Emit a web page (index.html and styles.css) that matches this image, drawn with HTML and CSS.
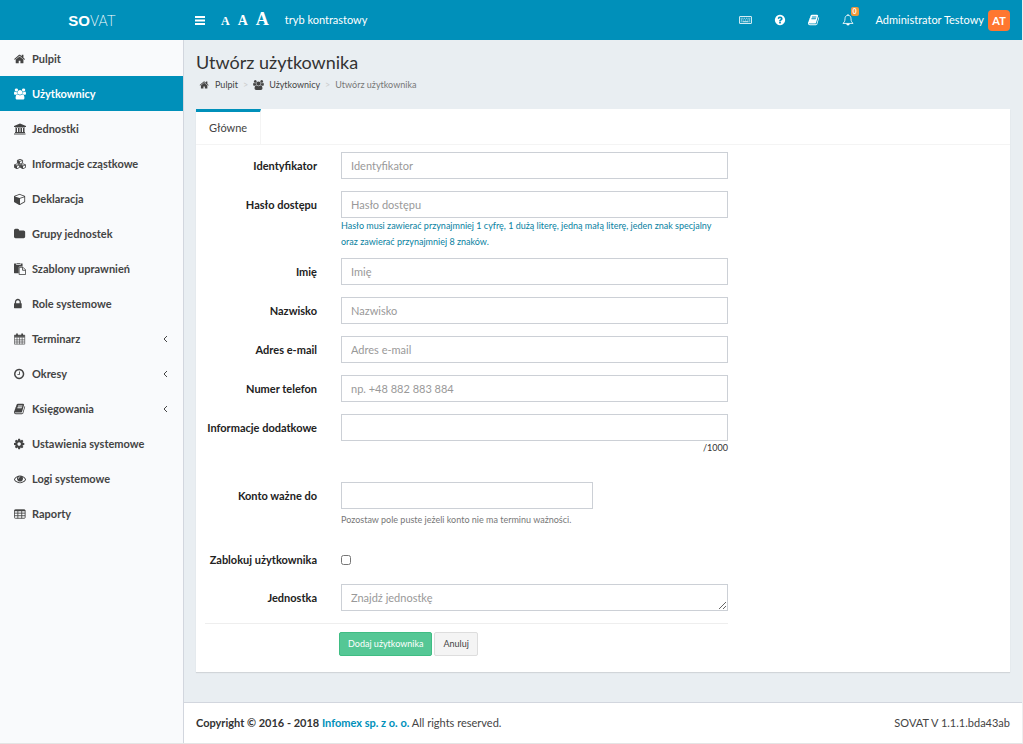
FILE: index.html
```
<!DOCTYPE html>
<html lang="pl">
<head>
<meta charset="utf-8">
<title>SOVAT</title>
<link rel="stylesheet" href="styles.css">
</head>
<body>
<svg class="sprite" aria-hidden="true">
<symbol id="home" viewBox="64 0 1792 1792"><path d="M1472 992v480q0 26-19 45t-45 19h-384v-384h-256v384h-384q-26 0-45-19t-19-45v-480q0-1 .5-3t.5-3l575-474 575 474q1 2 1 6zm223-69l-62 74q-8 9-21 11h-3q-13 0-21-7l-692-577-692 577q-12 8-24 7-13-2-21-11l-62-74q-8-10-7-23.5t11-21.5l719-599q32-26 76-26t76 26l244 204v-195q0-14 9-23t23-9h192q14 0 23 9t9 23v408l219 182q10 8 11 21.5t-7 23.5z"/></symbol>
<symbol id="users" viewBox="-64 0 1920 1792"><path d="M529 896q-162 5-265 128h-134q-82 0-138-40.5t-56-118.5q0-353 124-353 6 0 43.500 21t97.500 42.500 119 21.500q67 0 133-23-5 37-5 66 0 139 81 256zm1071 637q0 120-73 189.500t-194 69.500h-874q-121 0-194-69.500t-73-189.500q0-53 3.500-103.500t14-109 26.500-108.500 43-97.500 62-81 85.500-53.500 111.500-20q10 0 43 21.500t73 48 107 48 135 21.500 135-21.500 107-48 73-48 43-21.500q61 0 111.500 20t85.500 53.500 62 81 43 97.500 26.500 108.500 14 109 3.500 103.500zm-1024-1277q0 106-75 181t-181 75-181-75-75-181 75-181 181-75 181 75 75 181zm704 384q0 159-112.500 271.500t-271.500 112.500-271.500-112.500-112.500-271.500 112.500-271.500 271.500-112.500 271.500 112.500 112.500 271.500zm576 225q0 78-56 118.500t-138 40.500h-134q-103-123-265-128 81-117 81-256 0-29-5-66 66 23 133 23 59 0 119-21.500t97.500-42.500 43.500-21q124 0 124 353zm-128-609q0 106-75 181t-181 75-181-75-75-181 75-181 181-75 181 75 75 181z"/></symbol>
<symbol id="university" viewBox="0 0 24 24"><path d="M12 1l12 5v2h-2v1H2V8H0V6zM3 10h3v8h2v-8h3v8h2v-8h3v8h2v-8h3v8h1v2H2v-2h1zM1 21h22v2H0v-2z"/></symbol>
<symbol id="cubes" viewBox="0 0 28 24"><g fill="none" stroke="currentColor" stroke-width="2" stroke-linejoin="round"><path d="M14 1l6 2.500v6L14 12 8 9.500v-6zM8 3.500L14 6l6-2.500M7 11.500l6 2.500v6L7 23l-6-3v-6zM1 14l6 2.500L13 14M21 11.500l6 2.500v6l-6 3-6-3v-6zM15 14l6 2.500 6-2.500"/></g><path d="M8 3.500L14 6v6L8 9.500zM1 14l6 2.500V23l-6-3zM15 14l6 2.500V23l-6-3z"/></symbol>
<symbol id="cube" viewBox="0 0 1792 1792"><path d="M896 1629l640-349v-636l-640 233v752zm-64-865l698-254-698-254-698 254zm832-252v768q0 35-18 65t-49 47l-704 384q-28 16-61 16t-61-16l-704-384q-31-17-49-47t-18-65v-768q0-40 23-73t61-47l704-256q22-8 44-8t44 8l704 256q38 14 61 47t23 73z"/></symbol>
<symbol id="folder" viewBox="64 0 1792 1792"><path d="M1728 608v704q0 92-66 158t-158 66h-1216q-92 0-158-66t-66-158v-960q0-92 66-158t158-66h320q92 0 158 66t66 158v32h672q92 0 158 66t66 158z"/></symbol>
<symbol id="paste" viewBox="0 0 28 28"><path d="M1 1h4v3h11V1h4v7h-7q-2 0-2 2v14H1q-1 0-1-1V2q0-1 1-1zM6 0h9v2H6z"/><path d="M12 10h9l6 6v11H12zM20 10v7h7" fill="none" stroke="currentColor" stroke-width="2" stroke-linejoin="round"/></symbol>
<symbol id="lock" viewBox="320 0 1792 1792"><path d="M640 768h512v-192q0-106-75-181t-181-75-181 75-75 181v192zm832 96v576q0 40-28 68t-68 28h-960q-40 0-68-28t-28-68v-576q0-40 28-68t68-28h32v-192q0-184 132-316t316-132 316 132 132 316v192h32q40 0 68 28t28 68z"/></symbol>
<symbol id="calendar" viewBox="0 0 28 28"><g fill="none" stroke="currentColor" stroke-width="1.500"><path d="M1 5h24v21H1zM1 10h24M1 16h24M1 21h24M7 10v16M13 10v16M19 10v16"/><path d="M7 1v6M19 1v6" stroke-width="4"/><path d="M1 7h24" stroke-width="4"/></g></symbol>
<symbol id="clock" viewBox="128 0 1792 1792"><path d="M1024 544v448q0 14-9 23t-23 9h-320q-14 0-23-9t-9-23v-64q0-14 9-23t23-9h224v-352q0-14 9-23t23-9h64q14 0 23 9t9 23zm416 352q0-148-73-273t-198-198-273-73-273 73-198 198-73 273 73 273 198 198 273 73 273-73 198-198 73-273zm224 0q0 209-103 385.500t-279.500 279.500-385.500 103-385.500-103-279.500-279.500-103-385.500 103-385.500 279.500-279.500 385.500-103 385.500 103 279.500 279.500 103 385.500z"/></symbol>
<symbol id="book" viewBox="64 0 1792 1792"><path d="M1703 478q40 57 18 129l-275 906q-19 64-76.500 107.500t-122.500 43.500h-923q-77 0-148.500-53.500t-99.500-131.500q-24-67-2-127 0-4 3-27t4-37q1-8-3-21.500t-3-19.500q2-11 8-21t16.500-23.500 16.500-23.500q23-38 45-91.500t30-91.500q3-10 .5-30t-.5-28q3-11 17-28t17-23q21-36 42-92t25-90q1-9-2.500-32t.5-28q4-13 22-30.500t22-22.500q19-26 42.500-84.500t27.500-96.500q1-8-3-25.500t-2-26.500q2-8 9-18t18-23 17-21q8-12 16.500-30.500t15-35 16-36 19.500-32 26.500-23.500 36-11.500 47.500 5.500l-1 3q38-9 51-9h761q74 0 114 56t18 130l-274 906q-36 119-71.500 153.500t-128.500 34.500h-869q-27 0-38 15-11 16-1 43 24 70 144 70h923q29 0 56-15.500t35-41.500l300-987q7-22 5-57 38 15 59 43zm-1064 2q-4 13 2 22.500t20 9.500h608q13 0 25.500-9.500t16.500-22.500l21-64q4-13-2-22.500t-20-9.500h-608q-13 0-25.500 9.500t-16.500 22.500zm-83 256q-4 13 2 22.500t20 9.500h608q13 0 25.500-9.500t16.500-22.500l21-64q4-13-2-22.500t-20-9.500h-608q-13 0-25.500 9.500t-16.500 22.500z"/></symbol>
<symbol id="cog" viewBox="128 0 1792 1792"><path d="M1152 896q0-106-75-181t-181-75-181 75-75 181 75 181 181 75 181-75 75-181zm512-109v222q0 12-8 23t-20 13l-185 28q-19 54-39 91 35 50 107 138 10 12 10 25t-9 23q-27 37-99 108t-94 71q-12 0-26-9l-138-108q-44 23-91 38-16 136-29 186-7 28-36 28h-222q-14 0-24.500-8.500t-11.500-21.500l-28-184q-49-16-90-37l-141 107q-10 9-25 9-14 0-25-11-126-114-165-168-7-10-7-23 0-12 8-23 15-21 51-66.500t54-70.500q-27-50-41-99l-183-27q-13-2-21-12.500t-8-23.500v-222q0-12 8-23t19-13l186-28q14-46 39-92-40-57-107-138-10-12-10-24 0-10 9-23 26-36 98.500-107.500t94.500-71.500q13 0 26 10l138 107q44-23 91-38 16-136 29-186 7-28 36-28h222q14 0 24.500 8.500t11.500 21.500l28 184q49 16 90 37l142-107q9-9 24-9 13 0 25 10 129 119 165 170 7 8 7 22 0 12-8 23-15 21-51 66.500t-54 70.500q26 50 41 98l183 28q13 2 21 12.500t8 23.500z"/></symbol>
<symbol id="eye" viewBox="0 0 1792 1792"><path d="M1664 960q-152-236-381-353 61 104 61 225 0 185-131.500 316.500t-316.500 131.500-316.500-131.500-131.500-316.500q0-121 61-225-229 117-381 353 133 205 333.500 326.500t434.500 121.500 434.500-121.500 333.500-326.500zm-720-384q0-20-14-34t-34-14q-125 0-214.500 89.500t-89.500 214.500q0 20 14 34t34 14 34-14 14-34q0-86 61-147t147-61q20 0 34-14t14-34zm848 384q0 34-20 69-140 230-376.500 368.500t-499.500 138.500-499.500-139-376.500-368q-20-35-20-69t20-69q140-229 376.500-368t499.500-139 499.500 139 376.500 368q20 35 20 69z"/></symbol>
<symbol id="table" viewBox="0 0 28 28"><g fill="none" stroke="currentColor" stroke-width="2"><rect x="1" y="4" width="25" height="20" rx="2"/><path d="M1 12h25M1 18h25M9 7v17M18 7v17"/><path d="M1 6h25" stroke-width="3"/></g></symbol>
<symbol id="keyboard" viewBox="0 0 30 18"><rect x="1" y="1" width="28" height="16" rx="1" fill="none" stroke="currentColor" stroke-width="2"/><path d="M4 5h2m2 0h2m2 0h2m2 0h2m2 0h2m2 0h2M4 9h4m2 0h2m2 0h2m2 0h2m2 0h4M4 13h2m2 0h14m2 0h2" stroke="currentColor" stroke-width="2"/></symbol>
<symbol id="help" viewBox="0 0 1792 1792"><path d="M1024 1376v-192q0-14-9-23t-23-9h-192q-14 0-23 9t-9 23v192q0 14 9 23t23 9h192q14 0 23-9t9-23zm256-672q0-88-55.500-163t-138.500-116-170-41q-243 0-371 213-15 24 8 42l132 100q7 6 19 6 16 0 25-12 53-68 86-92 34-24 86-24 48 0 85.500 26t37.500 59q0 38-20 61t-68 45q-63 28-115.500 86.500t-52.500 125.500v36q0 14 9 23t23 9h192q14 0 23-9t9-23q0-19 21.500-49.500t54.500-49.500q32-18 49-28.500t46-35 44.500-48 28-60.500 12.500-81zm384 192q0 209-103 385.500t-279.500 279.500-385.500 103-385.500-103-279.500-279.500-103-385.500 103-385.500 279.500-279.500 385.500-103 385.500 103 279.500 279.500 103 385.500z"/></symbol>
<symbol id="bell" viewBox="0 0 28 28"><path d="M14 3c-5 0-7 4-7 8 0 6-2 9-5 11h24c-3-2-5-5-5-11 0-4-2-8-7-8zM14 0v3" fill="none" stroke="currentColor" stroke-width="2" stroke-linejoin="round"/><path d="M10 23h8a4 4 0 0 1-8 0z"/></symbol>
<symbol id="bars" viewBox="0 0 10 9"><path d="M0 0h10v2H0zM0 3.500h10v2H0zM0 7h10v2H0z"/></symbol>
<symbol id="left" viewBox="0 0 5 8"><path d="M4 1L1 4l3 3" fill="none" stroke="currentColor"/></symbol>
</svg>
<div class="app">
  <header class="topbar">
    <a class="logo" href="#"><b>SO</b><span>VAT</span></a>
    <nav class="tools">
      <button class="plain" aria-label="Menu"><svg class="icon-bars"><use href="#bars"/></svg></button>
      <span class="sizes"><button class="plain small">A</button><button class="plain medium">A</button><button class="plain large">A</button></span>
      <a href="#">tryb kontrastowy</a>
    </nav>
    <nav class="account">
      <a href="#" aria-label="Klawiatura"><svg class="icon-keyboard"><use href="#keyboard"/></svg></a>
      <a href="#" aria-label="Pomoc"><svg class="icon"><use href="#help"/></svg></a>
      <a href="#" aria-label="Podręcznik"><svg class="icon"><use href="#book"/></svg></a>
      <a class="alerts" href="#" aria-label="Powiadomienia"><svg class="icon"><use href="#bell"/></svg><span class="badge">0</span></a>
      <a class="user" href="#">Administrator Testowy <span class="avatar">AT</span></a>
    </nav>
  </header>
  <aside class="sidebar">
    <nav>
      <a href="#"><svg class="icon"><use href="#home"/></svg>Pulpit</a>
      <a class="active" href="#"><svg class="icon"><use href="#users"/></svg>Użytkownicy</a>
      <a href="#"><svg class="icon"><use href="#university"/></svg>Jednostki</a>
      <a href="#"><svg class="icon"><use href="#cubes"/></svg>Informacje cząstkowe</a>
      <a href="#"><svg class="icon"><use href="#cube"/></svg>Deklaracja</a>
      <a href="#"><svg class="icon"><use href="#folder"/></svg>Grupy jednostek</a>
      <a href="#"><svg class="icon"><use href="#paste"/></svg>Szablony uprawnień</a>
      <a href="#"><svg class="icon"><use href="#lock"/></svg>Role systemowe</a>
      <a href="#"><svg class="icon"><use href="#calendar"/></svg>Terminarz<svg class="chevron"><use href="#left"/></svg></a>
      <a href="#"><svg class="icon"><use href="#clock"/></svg>Okresy<svg class="chevron"><use href="#left"/></svg></a>
      <a href="#"><svg class="icon"><use href="#book"/></svg>Księgowania<svg class="chevron"><use href="#left"/></svg></a>
      <a href="#"><svg class="icon"><use href="#cog"/></svg>Ustawienia systemowe</a>
      <a href="#"><svg class="icon"><use href="#eye"/></svg>Logi systemowe</a>
      <a href="#"><svg class="icon"><use href="#table"/></svg>Raporty</a>
    </nav>
  </aside>
  <div class="content">
    <main>
      <h1>Utwórz użytkownika</h1>
      <nav class="crumbs">
        <a href="#"><svg class="icon"><use href="#home"/></svg>Pulpit</a><span class="sep">&gt;</span>
        <a href="#"><svg class="icon"><use href="#users"/></svg>Użytkownicy</a><span class="sep">&gt;</span>
        <span>Utwórz użytkownika</span>
      </nav>
      <section class="card">
        <div class="tabs"><button class="tab">Główne</button></div>
        <form class="form">
          <div class="row"><label for="login">Identyfikator</label><div><input class="field" id="login" type="text" placeholder="Identyfikator"></div></div>
          <div class="row"><label for="pass">Hasło dostępu</label><div><input class="field" id="pass" type="password" placeholder="Hasło dostępu"><p class="hint">Hasło musi zawierać przynajmniej 1 cyfrę, 1 dużą literę, jedną małą literę, jeden znak specjalny oraz zawierać przynajmniej 8 znaków.</p></div></div>
          <div class="row"><label for="name">Imię</label><div><input class="field" id="name" type="text" placeholder="Imię"></div></div>
          <div class="row"><label for="surname">Nazwisko</label><div><input class="field" id="surname" type="text" placeholder="Nazwisko"></div></div>
          <div class="row"><label for="email">Adres e-mail</label><div><input class="field" id="email" type="email" placeholder="Adres e-mail"></div></div>
          <div class="row"><label for="phone">Numer telefon</label><div><input class="field" id="phone" type="tel" placeholder="np. +48 882 883 884"></div></div>
          <div class="row counted"><label for="info">Informacje dodatkowe</label><div><input class="field" id="info" type="text"><p class="counter">/1000</p></div></div>
          <div class="row dated"><label for="valid">Konto ważne do</label><div><input class="field date" id="valid" type="text"><p class="note">Pozostaw pole puste jeżeli konto nie ma terminu ważności.</p></div></div>
          <div class="row check"><label for="block">Zablokuj użytkownika</label><div><input id="block" type="checkbox"></div></div>
          <div class="row"><label for="unit">Jednostka</label><div><textarea class="field" id="unit" rows="1" placeholder="Znajdź jednostkę"></textarea></div></div>
          <div class="actions"><button class="btn primary" type="button">Dodaj użytkownika</button><button class="btn" type="button">Anuluj</button></div>
        </form>
      </section>
    </main>
    <footer><span><b>Copyright © 2016 - 2018 <a href="#">Infomex sp. z o. o.</a></b> All rights reserved.</span><span>SOVAT V 1.1.1.bda43ab</span></footer>
  </div>
</div>
</body>
</html>
```
FILE: styles.css
```
* { box-sizing: border-box; }
body { margin: 0; background: #f0f0f0; color: #333; font: 11px/16px Lato, "Open Sans", sans-serif; }
a { color: inherit; text-decoration: none; }
p, h1 { margin: 0; }
button, input, textarea { font: inherit; color: inherit; }
svg { fill: currentColor; flex: none; }
.sprite { position: absolute; width: 0; height: 0; }
.icon { width: 12px; height: 12px; }
.plain { border: 0; padding: 0; background: none; cursor: pointer; }

.app { display: grid; grid-template: 40px 1fr / 184px 1fr; min-height: 100vh; border-right: 1px solid #eee; border-bottom: 1px solid #e4e4e4; }

.topbar { grid-column: 1 / -1; display: flex; align-items: center; background: #0090ba; color: #fff; }
.logo { width: 184px; text-align: center; font-size: 15px; }
.logo b { font-family: "Liberation Sans", sans-serif; }
.logo span { font-family: Roboto, sans-serif; font-weight: 200; }
.tools { display: flex; align-items: center; gap: 16px; padding-left: 11px; }
.icon-bars { display: block; width: 10px; height: 9px; }
.sizes { display: flex; align-items: baseline; gap: 8px; font-family: "Liberation Serif", serif; font-weight: bold; line-height: 20px; }
.small { font-size: 12px; }
.medium { font-size: 14px; }
.large { font-size: 18px; }
.account { display: flex; align-items: center; gap: 22px; margin-left: auto; padding-right: 12px; }
.account svg { display: block; }
.icon-keyboard { width: 13px; height: 8px; }
.alerts { position: relative; }
.badge { position: absolute; left: 9px; top: -7px; padding: 0 2px; border-radius: 2px; background: #f0983c; font-size: 7px; font-weight: bold; line-height: 9px; }
.user { display: flex; align-items: center; gap: 4px; }
.avatar { width: 22px; border-radius: 4px; background: #ff7730; text-align: center; font-weight: bold; line-height: 21px; }

.sidebar { background: #f9fafc; border-right: 1px solid #d2d6de; padding-top: 1px; }
.sidebar a { display: flex; align-items: center; gap: 6px; height: 35px; padding: 0 15px 0 14px; color: #444; font-weight: bold; }
.sidebar .active { background: #0090ba; color: #fff; }
.chevron { width: 5px; height: 8px; margin-left: auto; }

.content { display: flex; flex-direction: column; min-width: 0; background: #e9eef2; }
main { flex: 1; padding: 9px 12px 28px; }
h1 { font-size: 18px; font-weight: 400; line-height: 27px; }
.crumbs { display: flex; align-items: center; margin: 1px 0 16px 3px; font-size: 9px; color: #777; }
.crumbs a { display: flex; align-items: center; gap: 5px; color: #444; }
.crumbs .icon { width: 11px; height: 10px; }
.sep { margin: 0 5px; color: #ccc; }

.card { background: #fff; box-shadow: 0 1px 1px rgba(0, 0, 0, .1); }
.tabs { display: flex; border-bottom: 1px solid #f4f4f4; }
.tab { height: 35px; padding: 0 13px; border: 0; border-top: 3px solid #0090ba; border-right: 1px solid #f4f4f4; background: #fff; color: #444; }
.form { display: grid; gap: 12px; max-width: 541px; padding: 7px 9px 16px; }
.row { display: grid; grid-template-columns: 112px 1fr; gap: 24px; }
.row label { font-weight: bold; line-height: 28px; text-align: right; white-space: nowrap; color: #222; height: 27px; }
.field { display: block; width: 100%; height: 27px; padding: 4px 9px; border: 1px solid #ccd0d6; border-radius: 0; background: #fff; line-height: 17px; resize: vertical; }
.field::placeholder { color: #999; opacity: 1; }
.date { width: 65%; }
.hint { height: 28px; color: #087f9f; font-size: 9px; }
.counter { text-align: right; font-size: 9px; line-height: 13px; }
.note { margin-top: 3px; color: #777; font-size: 9px; }
.counted { margin-bottom: 16px; }
.dated { margin-bottom: 6px; }
.check { height: 26px; }
.check input { display: block; width: 10px; height: 10px; margin: 9px 0 0; }
.actions { display: flex; gap: 2px; padding: 8px 0 0 134px; border-top: 1px solid #eee; }
.btn { height: 24px; padding: 0 8px; border: 1px solid #ddd; border-radius: 2px; background: #f4f4f4; color: #444; font-size: 9px; line-height: 20px; }
.primary { border-color: #3fbd83; background: #55c795; color: #fff; }

footer { display: flex; justify-content: space-between; padding: 12px; border-top: 1px solid #d2d6de; background: #fff; color: #444; }
footer b { color: #333; }
footer a { color: #0090ba; }
```
